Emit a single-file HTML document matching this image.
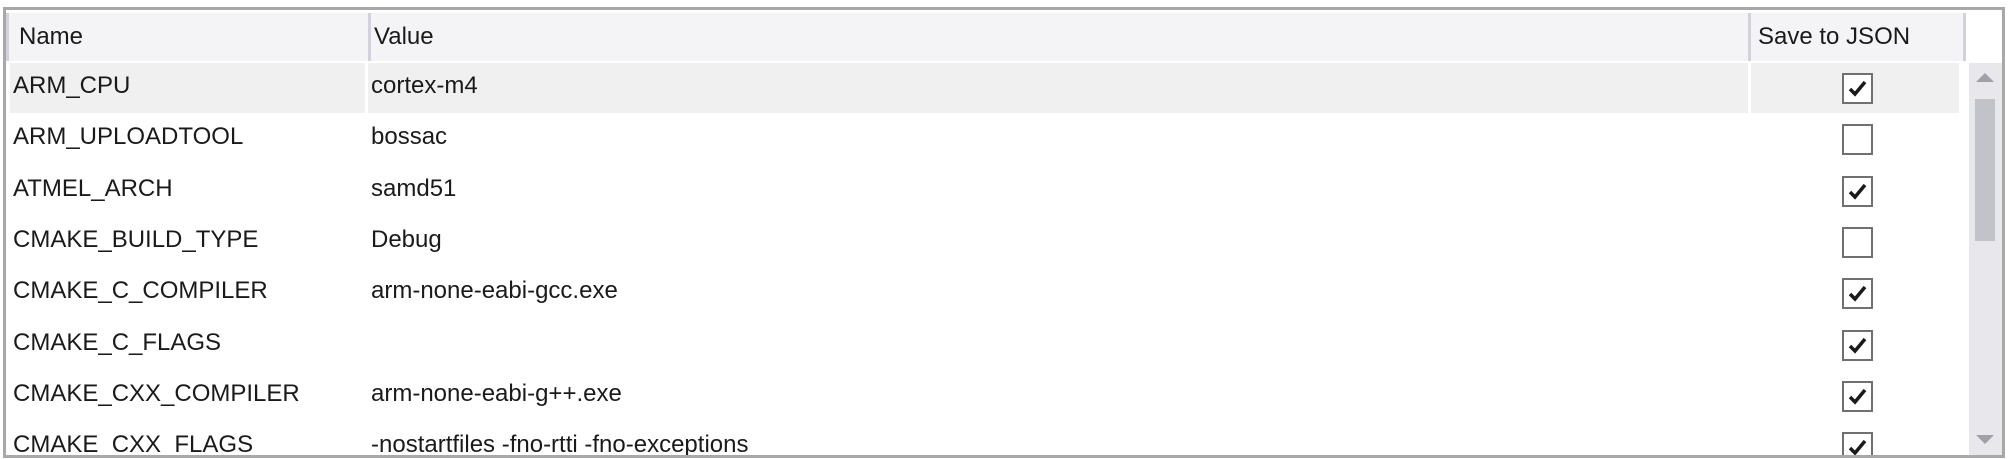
<!DOCTYPE html>
<html><head><style>
body{margin:0;width:2009px;height:459px;background:#fff;position:relative;overflow:hidden;font-family:"Liberation Sans",sans-serif;font-size:24px;color:#1a1a1a}
.box{position:absolute;left:3px;top:7px;width:1996px;height:445px;border:3px solid #a8a8a8;overflow:hidden}
.hdr{position:absolute;top:3px;height:48px;background:#f4f4f6;border-right:3px solid #d0d3dc;box-sizing:border-box}
.hdr span{position:absolute;left:10px;top:10px}
.row{position:absolute;left:0;width:1957px;height:51px}
.c{position:absolute;top:9px}
.cb{position:absolute;left:1836px;width:27px;height:27px;border:2px solid #707070;background:#fff;top:10px}
.cb svg{position:absolute;left:3px;top:3px}
</style></head><body>
<div class="box">
<div class="hdr" style="left:0;width:365px;border-left:3px solid #d0d3dc"><span>Name</span></div>
<div class="hdr" style="left:365px;width:1380px"><span style="left:3px">Value</span></div>
<div class="hdr" style="left:1745px;width:215px"><span style="left:7px">Save to JSON</span></div>

<div class="row" style="top:53px">
 <div style="position:absolute;left:4px;top:0;width:355px;height:50px;background:#f0f0f0"></div>
 <div style="position:absolute;left:362px;top:0;width:1380px;height:50px;background:#f0f0f0"></div>
 <div style="position:absolute;left:1745px;top:0;width:208px;height:50px;background:#f0f0f0"></div>
</div>

<div id="rows"></div>

<div style="position:absolute;left:1963px;top:53px;width:33px;height:400px;background:#e8e8ec">
 <div style="position:absolute;left:7px;top:10px;width:0;height:0;border-left:9px solid transparent;border-right:9px solid transparent;border-bottom:9px solid #a0a0a8"></div>
 <div style="position:absolute;left:6px;top:36px;width:20px;height:142px;background:#c2c3c9"></div>
 <div style="position:absolute;left:7px;top:372px;width:0;height:0;border-left:9px solid transparent;border-right:9px solid transparent;border-top:9px solid #a0a0a8"></div>
</div>
</div>
<script>
var d=[["ARM_CPU","cortex-m4",1],["ARM_UPLOADTOOL","bossac",0],["ATMEL_ARCH","samd51",1],["CMAKE_BUILD_TYPE","Debug",0],["CMAKE_C_COMPILER","arm-none-eabi-gcc.exe",1],["CMAKE_C_FLAGS","",1],["CMAKE_CXX_COMPILER","arm-none-eabi-g++.exe",1],["CMAKE_CXX_FLAGS","-nostartfiles -fno-rtti -fno-exceptions",1]];
var h="";
d.forEach(function(r,i){var t=53+i*51.3;
h+='<div class="row" style="top:'+t+'px"><div class="c" style="left:7px">'+r[0]+'</div><div class="c" style="left:365px">'+r[1]+'</div><div class="cb">'+(r[2]?'<svg width="21" height="21" viewBox="0 0 21 21"><path d="M3 11 L8 16 L18 4" fill="none" stroke="#1a1a1a" stroke-width="3.5"/></svg>':'')+'</div></div>';});
document.getElementById("rows").outerHTML=h;
</script>
</body></html>
